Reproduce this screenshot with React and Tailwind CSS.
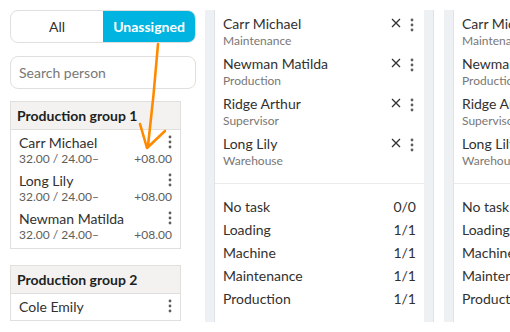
import React from "react";

const groups = [
  {
    name: "Production group 1",
    people: [
      { name: "Carr Michael", stats: "32.00 / 24.00–", diff: "+08.00" },
      { name: "Long Lily", stats: "32.00 / 24.00–", diff: "+08.00" },
      { name: "Newman Matilda", stats: "32.00 / 24.00–", diff: "+08.00" },
    ],
  },
  { name: "Production group 2", people: [{ name: "Cole Emily" }] },
];

const assigned = [
  { name: "Carr Michael", role: "Maintenance" },
  { name: "Newman Matilda", role: "Production" },
  { name: "Ridge Arthur", role: "Supervisor" },
  { name: "Long Lily", role: "Warehouse" },
];

const tasks = [
  ["No task", "0/0"],
  ["Loading", "1/1"],
  ["Machine", "1/1"],
  ["Maintenance", "1/1"],
  ["Production", "1/1"],
];

const Dots = () => (
  <svg width="4" height="14" viewBox="0 0 4 14" className="shrink-0">
    <circle cx="2" cy="2" r="1.4" fill="#605e5c" />
    <circle cx="2" cy="7" r="1.4" fill="#605e5c" />
    <circle cx="2" cy="12" r="1.4" fill="#605e5c" />
  </svg>
);

const Cross = () => (
  <svg width="10" height="10" viewBox="0 0 10 10" className="shrink-0">
    <path d="M1 1L9 9M9 1L1 9" stroke="#323130" strokeWidth="1.3" />
  </svg>
);

const Strip = () => (
  <div className="w-[10px] shrink-0 my-[10px] bg-[#edf1f4] border-r border-[#dde3e8]" />
);

const AssignCard = ({ width }) => (
  <div className={`${width} shrink-0 bg-white flex flex-col`}>
    <div className="pt-[15px] pb-[8px]">
      {assigned.map((p) => (
        <div key={p.name} className="h-[40px] pl-[8px] pr-[10px] flex justify-between">
          <div className="flex flex-col whitespace-nowrap">
            <span className="text-[14px] leading-[18px] text-[#323130]">{p.name}</span>
            <span className="text-[12px] leading-[16px] text-[#797775]">{p.role}</span>
          </div>
          <div className="flex items-start gap-[9px] pt-[3px]">
            <Cross />
            <Dots />
          </div>
        </div>
      ))}
    </div>
    <div className="border-t border-[#edebe9] pt-[11px]">
      {tasks.map(([t, v]) => (
        <div key={t} className="h-[23px] pl-[8px] pr-[8px] flex justify-between items-center text-[14px] text-[#323130] whitespace-nowrap">
          <span>{t}</span>
          <span>{v}</span>
        </div>
      ))}
    </div>
  </div>
);

export default function App() {
  return (
    <div
      className="relative w-[510px] h-[332px] overflow-hidden bg-white flex"
      style={{ fontFamily: "'Segoe UI', Lato, sans-serif" }}
    >
      <div className="w-[205px] shrink-0 pl-[10px] pt-[10px] flex flex-col">
        <div className="w-[186px] h-[33px] flex rounded-[8px] border border-[#e1dfdd] overflow-hidden">
          <div className="w-[92px] flex items-center justify-center text-[14px] text-[#323130]">All</div>
          <div className="flex-1 flex items-center justify-center bg-[#00b4e1] text-white text-[14px] font-bold">
            Unassigned
          </div>
        </div>
        <div className="mt-[13px] w-[186px] h-[33px] rounded-[8px] border border-[#e1dfdd] flex items-center pl-[8px] text-[14px] text-[#797775]">
          Search person
        </div>
        <div className="mt-[12px] flex flex-col gap-[16px] w-[171px]">
          {groups.map((g) => (
            <div key={g.name} className="border border-[#e1dfdd] pb-[4px]">
              <div className="h-[28px] bg-[#f3f2f1] border-b border-[#e1dfdd] flex items-center pl-[6px] text-[14px] font-bold text-[#201f1e]">
                {g.name}
              </div>
              {g.people.map((p) => (
                <div key={p.name} className="pt-[3px] pl-[8px] pr-[8px] pb-[1px]">
                  <div className="flex justify-between items-center h-[18px]">
                    <span className="text-[14px] text-[#323130]">{p.name}</span>
                    <Dots />
                  </div>
                  {p.stats && (
                    <div className="flex justify-between h-[16px] items-center text-[12px] text-[#605e5c]">
                      <span>{p.stats}</span>
                      <span>{p.diff}</span>
                    </div>
                  )}
                </div>
              ))}
            </div>
          ))}
        </div>
      </div>
      <Strip />
      <AssignCard width="w-[209px]" />
      <Strip />
      <div className="w-[10px] shrink-0" />
      <Strip />
      <AssignCard width="w-[208px]" />

      <svg className="absolute inset-0 pointer-events-none" width="510" height="332">
        <path d="M158 44 Q154 95 148 146" fill="none" stroke="#ff8a00" strokeWidth="2.6" strokeLinecap="round" />
        <path d="M140 124 L147 148 L165 131" fill="none" stroke="#ff8a00" strokeWidth="2.6" strokeLinecap="round" strokeLinejoin="round" />
      </svg>
    </div>
  );
}
